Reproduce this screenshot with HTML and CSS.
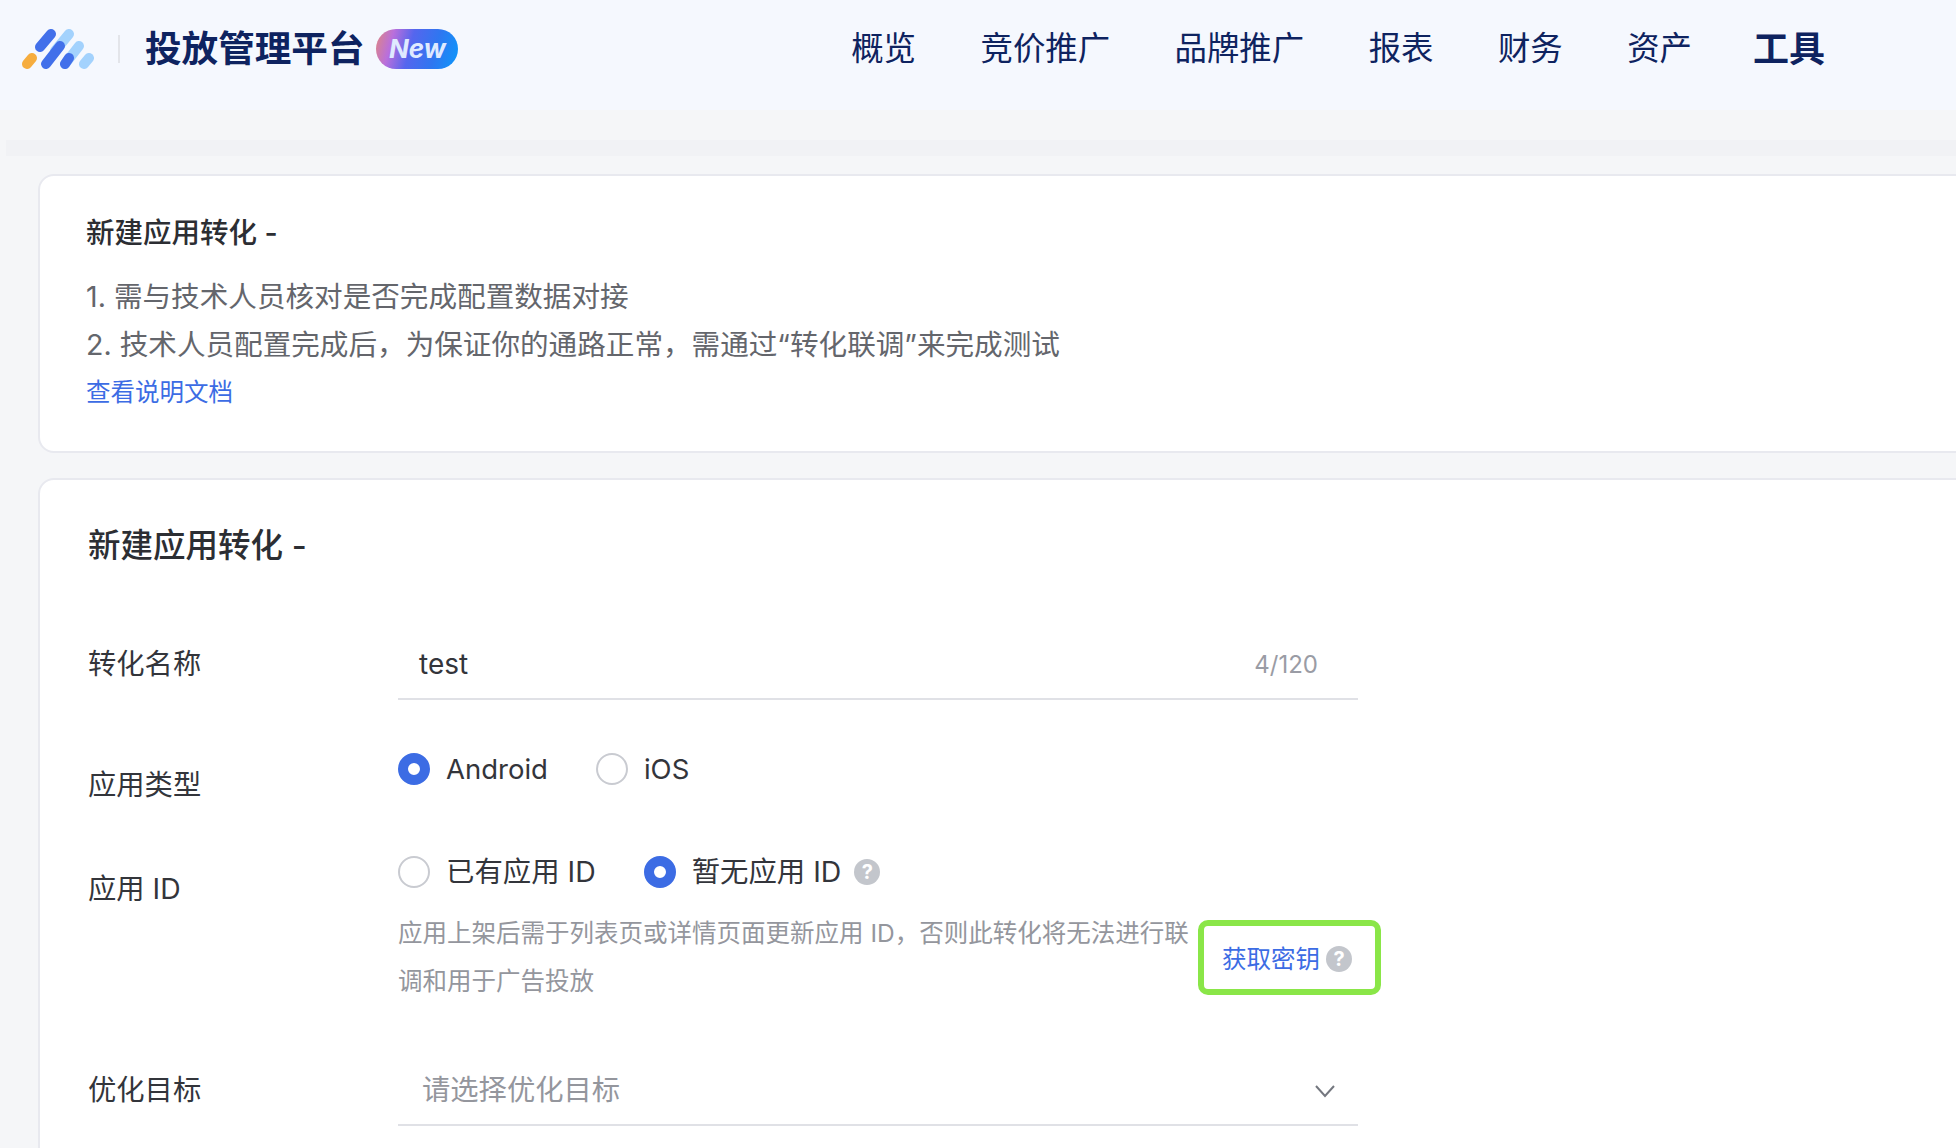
FILE: index.html
```html
<!DOCTYPE html>
<html lang="zh-CN">
<head>
  <meta charset="UTF-8">
  <title>投放管理平台</title>
  <link rel="stylesheet" href="styles.css">
</head>
<body>
  <!-- Header -->
  <header class="topbar">
    <div class="brand">
      <svg class="logo" width="72" height="40" viewBox="0 0 72 40" fill="none" stroke-linecap="round" stroke-width="10">
        <path d="M47 5 L33 22" stroke="#a3d2fd"/>
        <path d="M57 17 L43 35" stroke="#a3d2fd"/>
        <path d="M67 29 L62 35" stroke="#a3d2fd"/>
        <path d="M5 35 L10 29" stroke="#f6ad3f"/>
        <path d="M18 18 L29 5" stroke="#4270ea"/>
        <path d="M24 35 L38 17" stroke="#4270ea"/>
        <path d="M43 35 L47 29" stroke="#4270ea"/>
      </svg>
      <span class="brand-divider"></span>
      <span class="brand-name">投放管理平台</span>
      <span class="badge-new">New</span>
    </div>
    <nav class="main-nav">
      <a href="#">概览</a>
      <a href="#">竞价推广</a>
      <a href="#">品牌推广</a>
      <a href="#">报表</a>
      <a href="#">财务</a>
      <a href="#">资产</a>
      <a href="#" class="active">工具</a>
    </nav>
  </header>

  <div class="sub-band"></div>

  <main class="content">
    <!-- Notice -->
    <section class="card notice-card">
      <h2 class="notice-title">新建应用转化 -</h2>
      <p class="notice-line">1. 需与技术人员核对是否完成配置数据对接</p>
      <p class="notice-line">2. 技术人员配置完成后，为保证你的通路正常，需通过“转化联调”来完成测试</p>
      <a href="#" class="link doc-link">查看说明文档</a>
    </section>

    <!-- Form -->
    <section class="card form-card">
      <h1 class="form-title">新建应用转化 -</h1>

      <div class="form-row row-name">
        <label class="form-label label-center">转化名称</label>
        <div class="text-field">
          <span class="field-value">test</span>
          <span class="field-count">4/120</span>
        </div>
      </div>

      <div class="form-row row-type">
        <label class="form-label label-low">应用类型</label>
        <div class="radio-group">
          <span class="radio-item"><i class="radio checked"></i>Android</span>
          <span class="radio-item"><i class="radio"></i>iOS</span>
        </div>
      </div>

      <div class="form-row row-id">
        <label class="form-label label-low">应用 ID</label>
        <div class="form-control">
          <div class="radio-group">
            <span class="radio-item"><i class="radio"></i>已有应用 ID</span>
            <span class="radio-item"><i class="radio checked"></i>暂无应用 ID<i class="help help-after">?</i></span>
          </div>
          <div class="hint-row">
            <p class="hint">应用上架后需于列表页或详情页面更新应用 ID，否则此转化将无法进行联调和用于广告投放</p>
            <div class="key-box">
              <a href="#" class="link">获取密钥</a>
              <i class="help">?</i>
            </div>
          </div>
        </div>
      </div>

      <div class="form-row row-goal">
        <label class="form-label label-center">优化目标</label>
        <div class="select-field">
          <span class="select-placeholder">请选择优化目标</span>
          <svg class="chevron" width="22" height="14" viewBox="0 0 22 14" fill="none" stroke="#74777f" stroke-width="2">
            <path d="M2 2 L11 12 L20 2"/>
          </svg>
        </div>
      </div>
    </section>
  </main>
</body>
</html>
```

FILE: styles.css
```css
* {
  margin: 0;
  padding: 0;
  box-sizing: border-box;
}

html,
body {
  height: 100%;
  overflow: hidden;
}

body {
  font-family: Inter, "Noto Sans CJK SC", sans-serif;
  background: #f5f6f8;
  color: #33353b;
}

a {
  text-decoration: none;
}

/* Header */
.topbar {
  height: 110px;
  background: #f5f8fe;
  display: flex;
  justify-content: space-between;
  align-items: center;
  padding: 0 131px 12px 22px;
}

.brand {
  display: flex;
  align-items: center;
}

.brand-divider {
  width: 2px;
  height: 28px;
  background: #e3e5ea;
  margin: 0 25px 0 24px;
}

.brand-name {
  font-size: 36.6px;
  line-height: 40px;
  font-weight: 700;
  color: #0e2360;
}

.badge-new {
  margin-left: 12px;
  width: 82px;
  height: 40px;
  border-radius: 20px;
  background: linear-gradient(105deg, #e0877f 0%, #b96fdc 20%, #5566ee 42%, #2f76f0 70%, #0c98fb 100%);
  color: #dfeaff;
  font-size: 26px;
  font-weight: 700;
  font-style: italic;
  line-height: 40px;
  text-align: center;
}

.main-nav {
  display: flex;
  align-items: center;
  gap: 64.5px;
}

.main-nav a {
  font-size: 32.4px;
  line-height: 44px;
  color: #0e2360;
}

.main-nav a.active {
  font-size: 36px;
  font-weight: 700;
  margin-left: -3.5px;
}

.sub-band {
  height: 16px;
  margin: 30px 0 0 6px;
  background: #f1f2f5;
}

/* Cards */
.content {
  padding: 18px 0 0 38px;
}

.card {
  width: 2000px;
  background: #fff;
  border: 2px solid #e8e9ef;
  border-radius: 16px;
  padding-left: 47px;
}

.notice-card {
  height: 279px;
  padding-top: 37px;
  padding-left: 46px;
}

.notice-title {
  font-size: 28.5px;
  line-height: 40px;
  font-weight: 500;
  margin-bottom: 20px;
  color: #2c2e33;
}

.notice-line {
  font-size: 28.6px;
  line-height: 48px;
  color: #64666c;
}

.link {
  color: #3c6ce4;
  font-size: 24.5px;
  line-height: 40px;
}

.doc-link {
  display: block;
  margin-top: 3px;
}

.form-card {
  margin-top: 25px;
  padding-top: 44px;
  padding-bottom: 40px;
  padding-left: 48px;
}

.form-title {
  font-size: 32.5px;
  line-height: 44px;
  font-weight: 500;
  color: #2c2e33;
}

/* Form rows */
.form-row {
  display: flex;
}

.row-name {
  margin-top: 62px;
}

.row-type {
  margin-top: 33px;
}

.row-id {
  margin-top: 47px;
}

.row-goal {
  margin-top: 51px;
}

.form-label {
  width: 310px;
  flex-shrink: 0;
  font-size: 28.3px;
  line-height: 40px;
  color: #33353b;
}

.label-center {
  padding-top: 14px;
}

.row-type .label-low {
  padding-top: 32px;
}

.row-id .label-low {
  padding-top: 17px;
}

.text-field,
.select-field {
  width: 960px;
  height: 70px;
  border-bottom: 2px solid #e0e1e6;
  display: flex;
  justify-content: space-between;
  align-items: center;
}

.text-field {
  padding: 0 40px 0 21px;
}

.select-field {
  padding: 0 22px 0 24px;
}

.field-value {
  font-size: 28px;
  color: #33353b;
}

.field-count {
  font-size: 24px;
  color: #9a9ca5;
}

.select-placeholder {
  font-size: 28.3px;
  color: #94969d;
  margin-bottom: 5px;
}

.chevron {
  margin-top: 2px;
}

.radio-group {
  display: flex;
  gap: 48px;
}

.radio-item {
  display: flex;
  align-items: center;
  font-size: 28.4px;
  line-height: 40px;
  color: #33353b;
}

.row-type .radio-item {
  font-size: 27.5px;
}

.radio {
  width: 32px;
  height: 32px;
  border-radius: 50%;
  border: 2px solid #c9cbd1;
  margin-right: 16px;
}

.radio.checked {
  border: 10px solid #3c6ce4;
}

.help {
  width: 26px;
  height: 26px;
  border-radius: 50%;
  background: #c3c6cc;
  color: #fff;
  font-size: 20px;
  font-style: normal;
  font-weight: 700;
  line-height: 26px;
  text-align: center;
}

.help-after {
  margin-left: 13px;
}

.hint-row {
  display: flex;
  align-items: center;
  margin-top: 18px;
}

.hint {
  width: 795px;
  font-size: 24.5px;
  line-height: 47.5px;
  color: #94969d;
}

.key-box {
  margin-left: 5px;
  width: 183px;
  height: 75px;
  border: 6px solid #8ae648;
  border-radius: 10px;
  display: flex;
  align-items: center;
  padding: 3px 0 0 18px;
  gap: 6px;
}
```
